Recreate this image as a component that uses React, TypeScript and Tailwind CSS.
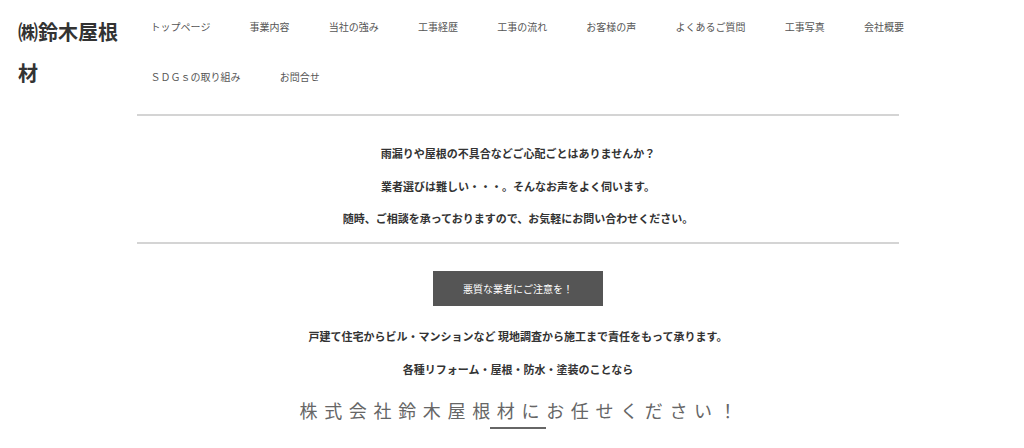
import React from "react";

const navItems = [
  "トップページ",
  "事業内容",
  "当社の強み",
  "工事経歴",
  "工事の流れ",
  "お客様の声",
  "よくあるご質問",
  "工事写真",
  "会社概要",
  "ＳＤＧｓの取り組み",
  "お問合せ",
];

const font = { fontFamily: '"Noto Sans CJK JP", "Noto Sans", sans-serif' };

export default function App() {
  return (
    <div className="min-h-[448px] w-[1024px] bg-white text-[#333]" style={font}>
      {/* Header */}
      <header className="flex items-start">
        <div className="ml-[18px] w-[113px] pt-[11px] text-[20px] font-bold leading-[41px] text-[#333]">
          <span className="block w-[104px]">㈱鈴木屋根材</span>
        </div>
        <nav className="flex-1 pt-[2px]">
          <ul className="flex flex-wrap">
            {navItems.map((item) => (
              <li
                key={item}
                className="flex h-[50px] items-center px-[19.6px] text-[10px] leading-[14px] text-[#555]"
              >
                {item}
              </li>
            ))}
          </ul>
        </nav>
      </header>

      {/* Main */}
      <main className="ml-[137px] w-[762px]">
        <div className="mt-[12px] h-[2px] bg-[#d4d4d4]" />

        <div className="flex flex-col items-center gap-[10.5px] pt-[26px] pb-[13px] text-[11px] font-bold leading-[22px] text-[#333]">
          <p>雨漏りや屋根の不具合などご心配ごとはありませんか？</p>
          <p>業者選びは難しい・・・。そんなお声をよく伺います。</p>
          <p>随時、ご相談を承っておりますので、お気軽にお問い合わせください。</p>
        </div>

        <div className="h-[2px] bg-[#d4d4d4]" />

        <div className="flex flex-col items-center">
          <div className="mt-[27px] flex h-[35px] w-[170px] items-center justify-center bg-[#555] text-[10px] text-white">
            悪質な業者にご注意を！
          </div>

          <div className="mt-[19px] flex flex-col items-center gap-[11px] text-[11px] font-bold leading-[22px] text-[#333]">
            <p>戸建て住宅からビル・マンションなど 現地調査から施工まで責任をもって承ります。</p>
            <p>各種リフォーム・屋根・防水・塗装のことなら</p>
          </div>

          <h2 className="mt-[16px] pl-[7px] text-[18px] font-normal leading-[28px] tracking-[0.37em] text-[#666]">
            株式会社鈴木屋根材にお任せください！
          </h2>
          <div className="mt-[3px] h-[2px] w-[56px] bg-[#666]" />
        </div>
      </main>
    </div>
  );
}
